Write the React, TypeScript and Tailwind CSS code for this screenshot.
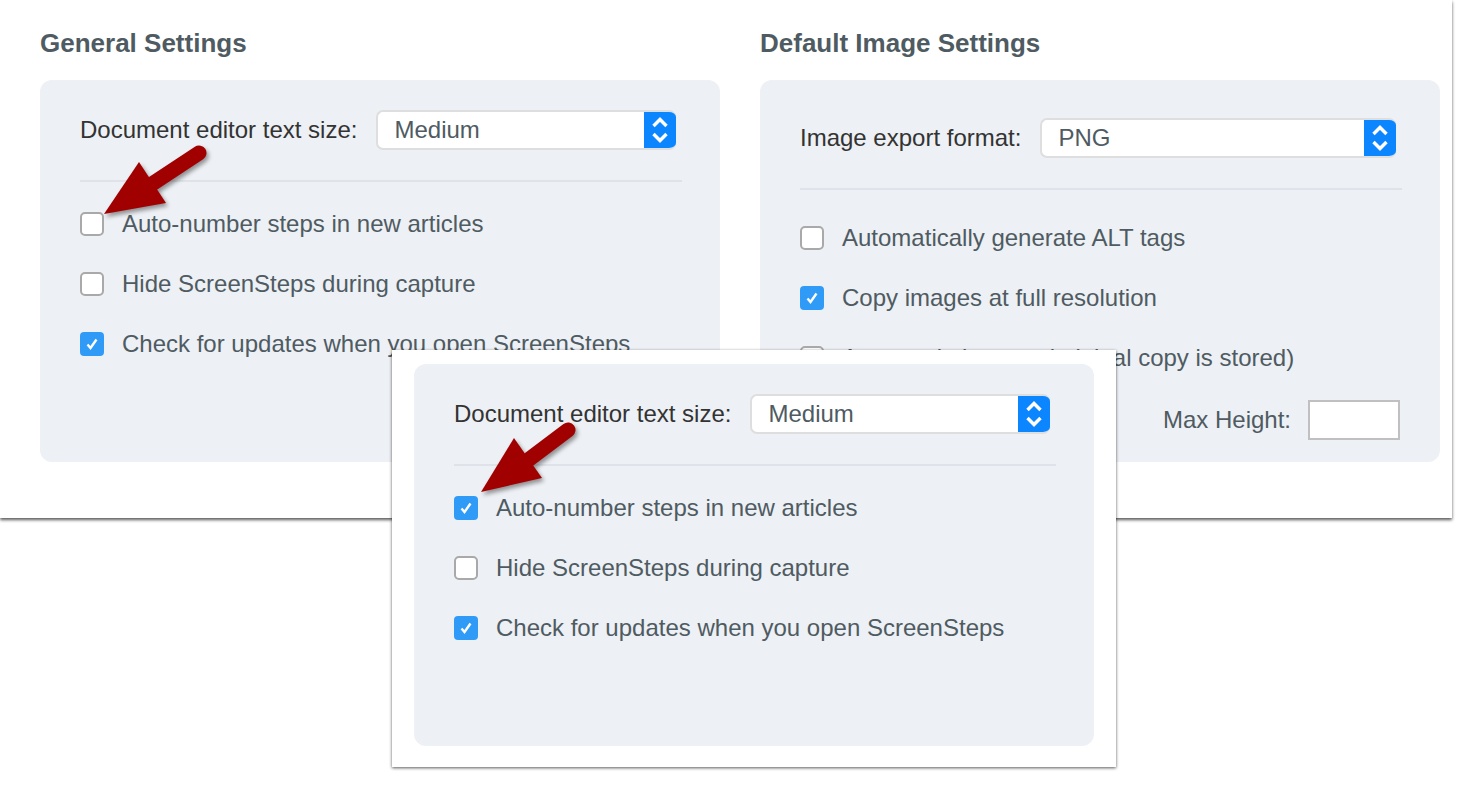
import type { ReactNode } from "react";

function Checkbox({ checked }: { checked?: boolean }) {
  if (checked) {
    return (
      <span className="flex h-6 w-6 shrink-0 items-center justify-center rounded-[4px] bg-[#2f9bf7]">
        <svg width="14" height="14" viewBox="0 0 14 14" fill="none">
          <path d="M2.5 7.5 5.5 11 11.5 2.5" stroke="#fff" strokeWidth="2.4" />
        </svg>
      </span>
    );
  }
  return <span className="h-6 w-6 shrink-0 rounded-[5px] border-2 border-[#a9a9a9] bg-white" />;
}

function CheckRow({ label, checked }: { label: string; checked?: boolean }) {
  return (
    <div className="flex h-6 items-center gap-[18px] whitespace-nowrap text-[24px] text-[#4f5b62]">
      <Checkbox checked={checked} />
      <span>{label}</span>
    </div>
  );
}

function SelectRow({ label, value, width }: { label: string; value: string; width: string }) {
  return (
    <div className="flex h-10 items-center gap-[19px] whitespace-nowrap text-[24px]">
      <span className="text-[#333]">{label}</span>
      <div className={`flex h-10 ${width} overflow-hidden rounded-[7px] border-y-2 border-l-2 border-[#dedede] bg-white`}>
        <span className="flex-1 pl-4 leading-[36px] text-[#4f5b62]">{value}</span>
        <span className="-my-0.5 flex h-10 w-8 items-center justify-center bg-[#0b86ff]">
          <svg width="18" height="28" viewBox="0 0 18 28" fill="none">
            <path d="M2.5 10 9 3.5 15.5 10M2.5 18 9 24.5 15.5 18" stroke="#fff" strokeWidth="3.4" />
          </svg>
        </span>
      </div>
    </div>
  );
}

function Panel({ children }: { children: ReactNode }) {
  return <div className="relative h-[382px] w-[680px] rounded-xl bg-[#edf0f4] px-10">{children}</div>;
}

function Divider() {
  return <div className="h-0.5 w-[602px] bg-[#dfe2e8]" />;
}

function Arrow({ className, d, tail, join }: { className: string; d: string; tail: string; join: string }) {
  return (
    <svg
      className={`absolute ${className} drop-shadow-[2px_3px_2px_rgba(0,0,0,0.4)]`}
      width="125"
      height="85"
      viewBox="0 0 125 85"
      fill="#a10000"
    >
      <path d={d} />
      <path d={`M${join} L${tail}`} stroke="#a10000" strokeWidth="15" strokeLinecap="round" />
    </svg>
  );
}

function GeneralPanel({ second }: { second?: boolean }) {
  return (
    <Panel>
      <div className="pt-[30px]">
        <SelectRow label="Document editor text size:" value="Medium" width="w-[300px]" />
      </div>
      <div className="mt-[30px]">
        <Divider />
      </div>
      <div className="mt-[30px] flex flex-col gap-9">
        <CheckRow label="Auto-number steps in new articles" checked={second} />
        <CheckRow label="Hide ScreenSteps during capture" />
        <CheckRow label="Check for updates when you open ScreenSteps" checked />
      </div>
      {second ? (
        <Arrow className="left-[56px] top-[56px]" d="M11 72 44 18 72 58Z" join="59.5 39" tail="98 10" />
      ) : (
        <Arrow className="left-[56px] top-[60px]" d="M8 74 43 22 70 63Z" join="57.5 43" tail="103 13" />
      )}
    </Panel>
  );
}

export default function App() {
  return (
    <div className="relative h-[808px] overflow-hidden bg-white font-['Liberation_Sans',Arial,sans-serif]">
      <div className="h-[518px] w-[1452px] bg-white pl-10 pt-7 shadow-[0_2px_3px_rgba(0,0,0,0.65)]">
        <div className="flex gap-10">
          <section>
            <h2 className="h-[52px] text-[26px] font-bold leading-[30px] text-[#4f5b62]">General Settings</h2>
            <GeneralPanel />
          </section>
          <section>
            <h2 className="h-[52px] text-[26px] font-bold leading-[30px] text-[#4f5b62]">Default Image Settings</h2>
            <Panel>
              <div className="pt-[38px]">
                <SelectRow label="Image export format:" value="PNG" width="w-[356px]" />
              </div>
              <div className="mt-[30px]">
                <Divider />
              </div>
              <div className="mt-9 flex flex-col gap-9">
                <CheckRow label="Automatically generate ALT tags" />
                <CheckRow label="Copy images at full resolution" checked />
                <CheckRow label="Auto-scale images (original copy is stored)" />
              </div>
              <div className="mt-[30px] flex h-10 items-center justify-end gap-[17px] text-[24px] text-[#4f5b62]">
                <span>Max Height:</span>
                <span className="h-10 w-[92px] border-2 border-[#c0c0c0] bg-white" />
              </div>
            </Panel>
          </section>
        </div>
      </div>
      <div className="absolute left-[392px] top-[350px] h-[417px] w-[724px] bg-white px-[22px] pt-3.5 shadow-[0_1px_3px_rgba(0,0,0,0.65)]">
        <GeneralPanel second />
      </div>
    </div>
  );
}
